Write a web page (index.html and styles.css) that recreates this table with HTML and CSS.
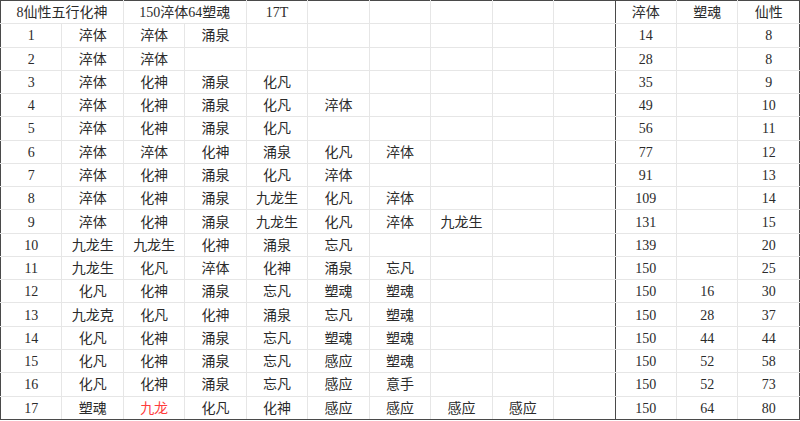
FILE: index.html
```html
<!DOCTYPE html>
<html lang="zh">
<head>
<meta charset="utf-8">
<link rel="stylesheet" href="styles.css">
</head>
<body>
<table class="sheet">
<colgroup>
<col><col><col><col><col><col><col><col><col><col class="split"><col><col><col>
</colgroup>
<tr>
<td colspan="2">8仙性五行化神</td><td colspan="2">150淬体64塑魂</td><td>17T</td><td></td><td></td><td></td><td></td><td class="sep"></td><td>淬体</td><td>塑魂</td><td>仙性</td>
</tr>
<tr><td>1</td><td>淬体</td><td>淬体</td><td>涌泉</td><td></td><td></td><td></td><td></td><td></td><td class="sep"></td><td>14</td><td></td><td>8</td></tr>
<tr><td>2</td><td>淬体</td><td>淬体</td><td></td><td></td><td></td><td></td><td></td><td></td><td class="sep"></td><td>28</td><td></td><td>8</td></tr>
<tr><td>3</td><td>淬体</td><td>化神</td><td>涌泉</td><td>化凡</td><td></td><td></td><td></td><td></td><td class="sep"></td><td>35</td><td></td><td>9</td></tr>
<tr><td>4</td><td>淬体</td><td>化神</td><td>涌泉</td><td>化凡</td><td>淬体</td><td></td><td></td><td></td><td class="sep"></td><td>49</td><td></td><td>10</td></tr>
<tr><td>5</td><td>淬体</td><td>化神</td><td>涌泉</td><td>化凡</td><td></td><td></td><td></td><td></td><td class="sep"></td><td>56</td><td></td><td>11</td></tr>
<tr><td>6</td><td>淬体</td><td>淬体</td><td>化神</td><td>涌泉</td><td>化凡</td><td>淬体</td><td></td><td></td><td class="sep"></td><td>77</td><td></td><td>12</td></tr>
<tr><td>7</td><td>淬体</td><td>化神</td><td>涌泉</td><td>化凡</td><td>淬体</td><td></td><td></td><td></td><td class="sep"></td><td>91</td><td></td><td>13</td></tr>
<tr><td>8</td><td>淬体</td><td>化神</td><td>涌泉</td><td>九龙生</td><td>化凡</td><td>淬体</td><td></td><td></td><td class="sep"></td><td>109</td><td></td><td>14</td></tr>
<tr><td>9</td><td>淬体</td><td>化神</td><td>涌泉</td><td>九龙生</td><td>化凡</td><td>淬体</td><td>九龙生</td><td></td><td class="sep"></td><td>131</td><td></td><td>15</td></tr>
<tr><td>10</td><td>九龙生</td><td>九龙生</td><td>化神</td><td>涌泉</td><td>忘凡</td><td></td><td></td><td></td><td class="sep"></td><td>139</td><td></td><td>20</td></tr>
<tr><td>11</td><td>九龙生</td><td>化凡</td><td>淬体</td><td>化神</td><td>涌泉</td><td>忘凡</td><td></td><td></td><td class="sep"></td><td>150</td><td></td><td>25</td></tr>
<tr><td>12</td><td>化凡</td><td>化神</td><td>涌泉</td><td>忘凡</td><td>塑魂</td><td>塑魂</td><td></td><td></td><td class="sep"></td><td>150</td><td>16</td><td>30</td></tr>
<tr><td>13</td><td>九龙克</td><td>化凡</td><td>化神</td><td>涌泉</td><td>忘凡</td><td>塑魂</td><td></td><td></td><td class="sep"></td><td>150</td><td>28</td><td>37</td></tr>
<tr><td>14</td><td>化凡</td><td>化神</td><td>涌泉</td><td>忘凡</td><td>塑魂</td><td>塑魂</td><td></td><td></td><td class="sep"></td><td>150</td><td>44</td><td>44</td></tr>
<tr><td>15</td><td>化凡</td><td>化神</td><td>涌泉</td><td>忘凡</td><td>感应</td><td>塑魂</td><td></td><td></td><td class="sep"></td><td>150</td><td>52</td><td>58</td></tr>
<tr><td>16</td><td>化凡</td><td>化神</td><td>涌泉</td><td>忘凡</td><td>感应</td><td>意手</td><td></td><td></td><td class="sep"></td><td>150</td><td>52</td><td>73</td></tr>
<tr><td>17</td><td>塑魂</td><td class="red">九龙</td><td>化凡</td><td>化神</td><td>感应</td><td>感应</td><td>感应</td><td>感应</td><td class="sep"></td><td>150</td><td>64</td><td>80</td></tr>
</table>
</body>
</html>
```

FILE: styles.css
```css
html, body {
  margin: 0;
  padding: 0;
  background: #ffffff;
}

.sheet {
  border-collapse: collapse;
  table-layout: fixed;
  width: 800px;
  height: 420px;
  border: 1px solid #4a4a4a;
  font-family: "Liberation Serif", "Noto Sans CJK SC", serif;
  font-size: 14px;
  color: #2b2b2b;
}

.sheet td {
  border: 1px solid #e6e6e6;
  padding: 2px 0 0 0;
  text-align: center;
  vertical-align: middle;
  white-space: nowrap;
  line-height: 16px;
}

.sheet tr:first-child td {
  border-top: 1px solid #4a4a4a;
}

.sheet tr:last-child td {
  border-bottom: 1px solid #4a4a4a;
}

.sheet td:first-child {
  border-left: 1px solid #4a4a4a;
}

.sheet td:last-child {
  border-right: 1px solid #4a4a4a;
}

.sheet td.sep {
  border-right: 1px solid #4a4a4a;
}

.sheet td.red {
  color: #ff3c3c;
}
```
